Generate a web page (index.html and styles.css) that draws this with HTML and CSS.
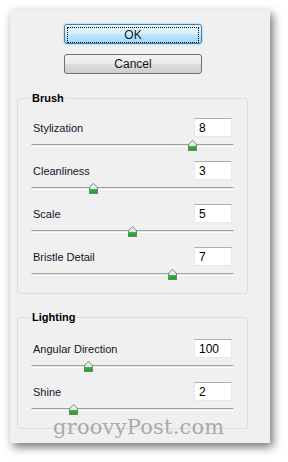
FILE: index.html
```html
<html>
  <head>
    <link rel="stylesheet" href="styles.css">
  </head>
  <body>
    <div class="dialog">
      <div class="buttons">
        <button class="btn default"><span>OK</span></button>
        <button class="btn">Cancel</button>
      </div>

      <fieldset class="group">
        <legend>Brush</legend>
        <div class="field">
          <div class="line"><label>Stylization</label><input type="text" value="8"></div>
          <div class="slider"><div class="track"></div><div class="thumb" style="left: 157px"></div></div>
        </div>
        <div class="field">
          <div class="line"><label>Cleanliness</label><input type="text" value="3"></div>
          <div class="slider"><div class="track"></div><div class="thumb" style="left: 58px"></div></div>
        </div>
        <div class="field">
          <div class="line"><label>Scale</label><input type="text" value="5"></div>
          <div class="slider"><div class="track"></div><div class="thumb" style="left: 97px"></div></div>
        </div>
        <div class="field">
          <div class="line"><label>Bristle Detail</label><input type="text" value="7"></div>
          <div class="slider"><div class="track"></div><div class="thumb" style="left: 137px"></div></div>
        </div>
      </fieldset>

      <fieldset class="group lighting">
        <legend>Lighting</legend>
        <div class="field">
          <div class="line"><label>Angular Direction</label><input type="text" value="100"></div>
          <div class="slider"><div class="track"></div><div class="thumb" style="left: 53px"></div></div>
        </div>
        <div class="field">
          <div class="line"><label>Shine</label><input type="text" value="2"></div>
          <div class="slider"><div class="track"></div><div class="thumb" style="left: 38px"></div></div>
        </div>
      </fieldset>

      <div class="watermark">groovyPost.com</div>
    </div>
  </body>
</html>
```

FILE: styles.css
```css
body { margin: 0; background: #fff; font: 11px "Liberation Sans", Arial, sans-serif; color: #141428; }

.dialog { position: relative; margin: 10px 0 0 10px; width: 260px; height: 433px; background: #f0f0f0; box-sizing: border-box; padding: 14px 0 0 7px; box-shadow: 3px 4px 9px rgba(0,0,0,0.55); }

.buttons { display: flex; flex-direction: column; gap: 10px; margin-left: 47px; width: 138px; }
.btn { height: 20px; width: 138px; border: 1px solid #707070; border-radius: 3px; font: 12px "Liberation Sans", Arial, sans-serif; color: #141428; padding: 0;
  background: linear-gradient(#f2f2f2 0%, #ebebeb 50%, #dddddd 50%, #cfcfcf 100%); }
.btn.default { border-color: #3c7fb1; box-shadow: 0 0 2px #4fc3f7; padding: 2px;
  background: linear-gradient(#eaf6fd 0%, #d9f0fc 50%, #bee6fd 50%, #a7d9f5 100%); }
.btn.default span { display: block; height: 14px; line-height: 14px; border: 1px dotted #000; }

.group { margin: 18px 0 0 0; width: 231px; box-sizing: border-box; border: 1px solid #d5dfe5; border-radius: 3px; padding: 14px 15px 3px 14px; }
.group.lighting { margin-top: 17px; padding-top: 16px; padding-bottom: 3px; }
legend { font-weight: bold; font-size: 11px; padding: 0 2px; margin-left: -2px; color: #000; }

.field { height: 43px; }
.line { display: flex; justify-content: space-between; align-items: center; height: 19px; }
.line label { padding-left: 1px; }
.line input { width: 38px; height: 19px; box-sizing: border-box; border: 1px solid #e3e9ef; border-top-color: #abadb3; background: #fff; font: 12px "Liberation Sans", Arial, sans-serif; color: #000; padding: 0 0 0 4px; outline: none; }

.slider { position: relative; height: 24px; margin: 0 -2px 0 -1px; }
.track { position: absolute; left: 0; right: 0; top: 7px; height: 3px; border-radius: 2px; border-top: 1px solid #a0a0a0; border-bottom: 1px solid #fff; background: #e7eaea; box-sizing: border-box; }
.thumb { position: absolute; top: 3px; width: 9px; height: 11px; }
.thumb::before { content: ""; position: absolute; left: 0; top: 0; width: 9px; height: 11px; background: #6a8a6a;
  clip-path: polygon(50% 0, 100% 40%, 100% 100%, 0 100%, 0 40%); }
.thumb::after { content: ""; position: absolute; left: 1px; top: 1px; width: 7px; height: 9px;
  background: linear-gradient(#fdfdfd 0%, #e4e4e4 55%, #3bb54a 60%, #1f9a2e 100%);
  clip-path: polygon(50% 0, 100% 40%, 100% 100%, 0 100%, 0 40%); }

.watermark { position: absolute; left: 43px; top: 405px; font: 21px "DejaVu Serif", serif; color: rgba(150,150,150,0.8); letter-spacing: 0.2px; }
```
